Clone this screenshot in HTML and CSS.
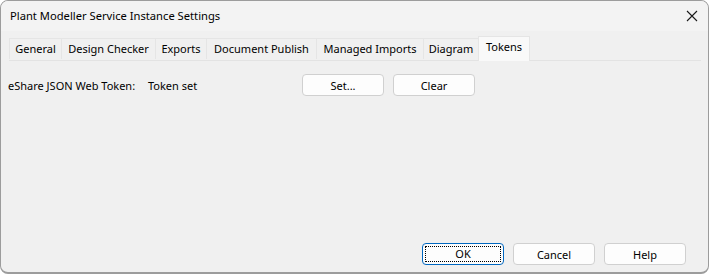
FILE: index.html
```html
<!DOCTYPE html>
<html>
<head>
	<title>Plant Modeller Service Instance Settings</title>
	<link rel="stylesheet" href="styles.css">
</head>
<body>
	<div class="window">
		<!-- Title bar with the caption and the close button. -->
		<div class="titlebar">
			<span class="caption">Plant Modeller Service Instance Settings</span>
			<span class="close">
				<svg width="12" height="12" viewBox="0 0 12 12">
					<path d="M1 1 L11 11 M11 1 L1 11" stroke="#1a1a1a" stroke-width="1.1" fill="none"/>
				</svg>
			</span>
		</div>

		<div class="body">
			<!-- Property sheet tabs. -->
			<ul class="tabs">
				<li class="tab tab-general">General</li>
				<li class="tab tab-design">Design Checker</li>
				<li class="tab tab-exports">Exports</li>
				<li class="tab tab-publish">Document Publish</li>
				<li class="tab tab-imports">Managed Imports</li>
				<li class="tab tab-diagram">Diagram</li>
				<li class="tab tab-tokens selected">Tokens</li>
			</ul>

			<div class="page">
				<div class="row">
					<span class="label">eShare JSON Web Token:</span>
					<span class="value">Token set</span>
					<button class="btn btn-set">Set...</button>
					<button class="btn btn-clear">Clear</button>
				</div>
			</div>

			<!-- Dialog buttons. -->
			<div class="footer">
				<button class="btn btn-default"><span class="focus">OK</span></button>
				<button class="btn">Cancel</button>
				<button class="btn">Help</button>
			</div>
		</div>
	</div>
</body>
</html>
```

FILE: styles.css
```css
html, body {
	margin: 0;
	padding: 0;
	background: #ffffff;
}

.window {
	box-sizing: border-box;
	width: 709px;
	height: 274px;
	display: flex;
	flex-direction: column;
	background: #f0f0f0;
	border: 1px solid #9c9c9c;
	border-bottom-width: 2px;
	border-radius: 8px;
	overflow: hidden;
	font-family: "Noto Sans", "Liberation Sans", sans-serif;
	font-size: 11px;
	color: #000000;
}

.titlebar {
	height: 30px;
	display: flex;
	align-items: center;
	justify-content: space-between;
	background: #f3f3f3;
	padding: 0 10px 0 9px;
	font-size: 11.2px;
}

.caption {
	margin-top: -1px;
}

.close {
	display: flex;
	width: 12px;
	height: 12px;
}

.body {
	flex: 1;
	display: flex;
	flex-direction: column;
	padding: 0 7px 7px 7px;
}

ul.tabs {
	display: flex;
	list-style: none;
	margin: 5px 0 0 1px;
	padding: 2px 0 0 0;
	border-bottom: 1px solid #e3e3e3;
	height: 22px;
}

.tab {
	box-sizing: border-box;
	height: 21px;
	line-height: 19px;
	text-align: center;
	background: #f0f0f0;
	border: 1px solid #e5e5e5;
	border-left: none;
	border-bottom: none;
}

.tab:first-child {
	border-left: 1px solid #e5e5e5;
}

.tab-general { width: 53px; }
.tab-design { width: 94px; }
.tab-exports { width: 51px; }
.tab-publish { width: 110px; }
.tab-imports { width: 107px; }
.tab-diagram { width: 55px; }
.tab-tokens { width: 50px; }

.tab.selected {
	height: 25px;
	margin-top: -2px;
	margin-left: -1px;
	width: 52px;
	line-height: 20px;
	background: #f9f9f9;
	border: 1px solid #e5e5e5;
	border-bottom: none;
	position: relative;
	z-index: 1;
}

.page {
	flex: 1;
	padding-top: 13px;
}

.row {
	display: flex;
	align-items: center;
}

.label {
	width: 140px;
}

.value {
	width: 154px;
}

.btn {
	box-sizing: border-box;
	width: 82px;
	height: 22px;
	padding: 0;
	font-family: inherit;
	font-size: 11px;
	color: #000000;
	background: #fdfdfd;
	border: 1px solid #d0d0d0;
	border-radius: 4px;
}

.btn-clear {
	margin-left: 9px;
}

.footer {
	display: flex;
	justify-content: flex-end;
	gap: 9px;
	padding-right: 15px;
}

.btn-default {
	border: 1px solid #0067c0;
	padding: 2px;
}

.focus {
	display: block;
	height: 100%;
	box-sizing: border-box;
	border: 1px dotted #000000;
	line-height: 14px;
}
```
